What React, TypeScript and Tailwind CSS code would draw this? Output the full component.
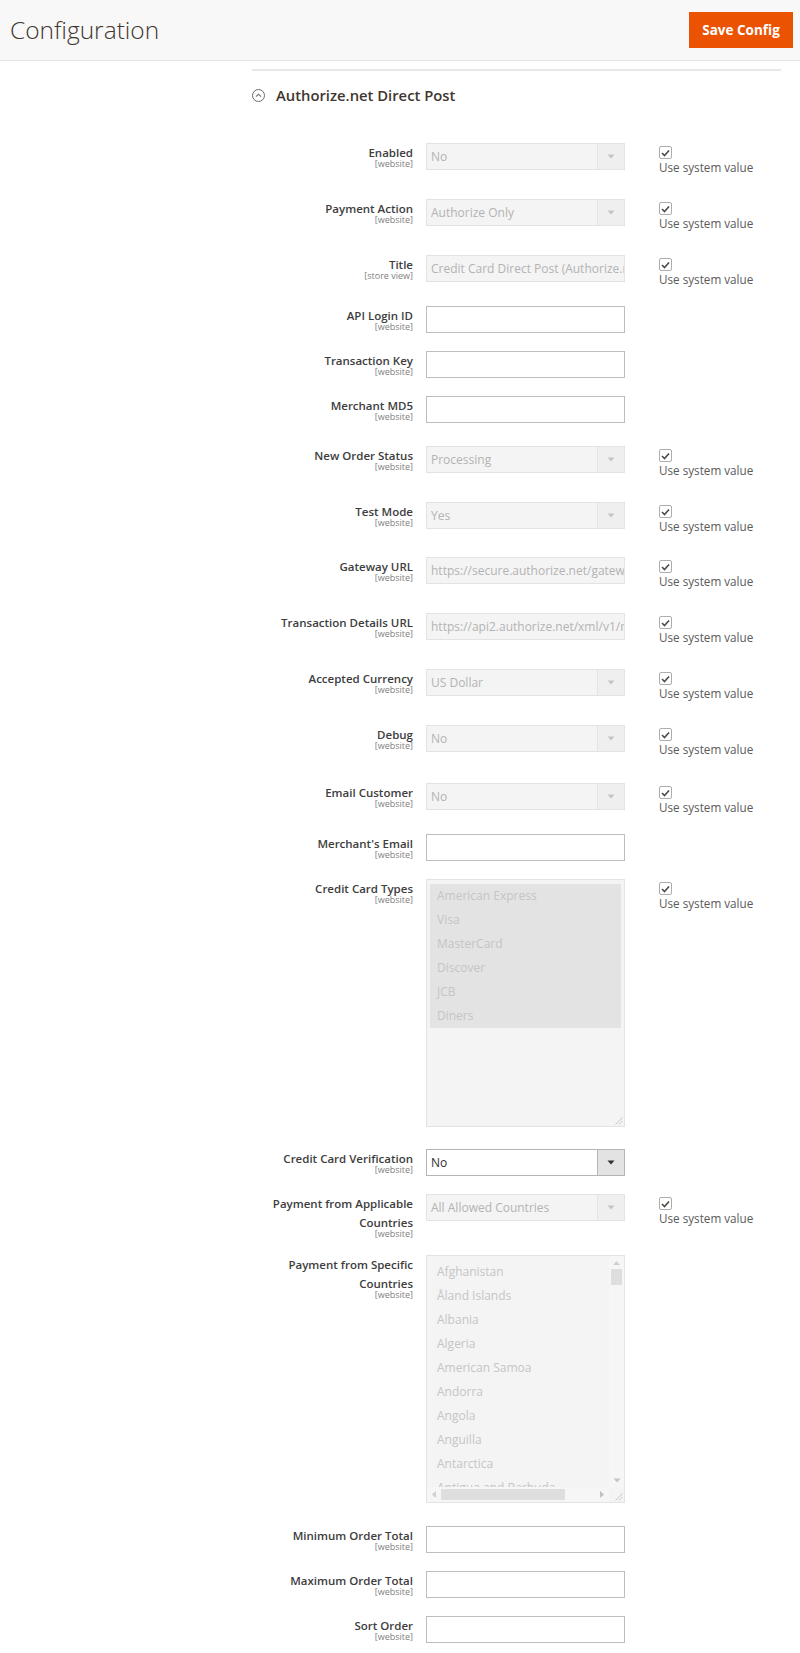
import React from "react";

type Kind = "select" | "text" | "multi" | "countries";

interface Row {
  label: string;
  scope: string;
  kind: Kind;
  value?: string;
  disabled?: boolean;
  system?: boolean;
  space: string;
}

const rows: Row[] = [
  { label: "Enabled", scope: "[website]", kind: "select", value: "No", disabled: true, system: true, space: "pt-[5px] pb-[19px]" },
  { label: "Payment Action", scope: "[website]", kind: "select", value: "Authorize Only", disabled: true, system: true, space: "pt-[5px] pb-[19px]" },
  { label: "Title", scope: "[store view]", kind: "text", value: "Credit Card Direct Post (Authorize.net)", disabled: true, system: true, space: "pt-[5px] pb-[19px]" },
  { label: "API Login ID", scope: "[website]", kind: "text", space: "pb-[18px]" },
  { label: "Transaction Key", scope: "[website]", kind: "text", space: "pb-[18px]" },
  { label: "Merchant MD5", scope: "[website]", kind: "text", space: "pb-[18px]" },
  { label: "New Order Status", scope: "[website]", kind: "select", value: "Processing", disabled: true, system: true, space: "pt-[5px] pb-[19px]" },
  { label: "Test Mode", scope: "[website]", kind: "select", value: "Yes", disabled: true, system: true, space: "pt-[5px] pb-[18px]" },
  { label: "Gateway URL", scope: "[website]", kind: "text", value: "https://secure.authorize.net/gateway/transact.dll", disabled: true, system: true, space: "pt-[5px] pb-[19px]" },
  { label: "Transaction Details URL", scope: "[website]", kind: "text", value: "https://api2.authorize.net/xml/v1/request.api", disabled: true, system: true, space: "pt-[5px] pb-[19px]" },
  { label: "Accepted Currency", scope: "[website]", kind: "select", value: "US Dollar", disabled: true, system: true, space: "pt-[5px] pb-[19px]" },
  { label: "Debug", scope: "[website]", kind: "select", value: "No", disabled: true, system: true, space: "pt-[5px] pb-[21px]" },
  { label: "Email Customer", scope: "[website]", kind: "select", value: "No", disabled: true, system: true, space: "pt-[5px] pb-[19px]" },
  { label: "Merchant's Email", scope: "[website]", kind: "text", space: "pb-[18px]" },
  { label: "Credit Card Types", scope: "[website]", kind: "multi", disabled: true, system: true, space: "pb-[22px]" },
  { label: "Credit Card Verification", scope: "[website]", kind: "select", value: "No", space: "pb-[18px]" },
  { label: "Payment from Applicable Countries", scope: "[website]", kind: "select", value: "All Allowed Countries", disabled: true, system: true, space: "pb-[17px]" },
  { label: "Payment from Specific Countries", scope: "[website]", kind: "countries", disabled: true, space: "pb-[23px]" },
  { label: "Minimum Order Total", scope: "[website]", kind: "text", space: "pb-[18px]" },
  { label: "Maximum Order Total", scope: "[website]", kind: "text", space: "pb-[18px]" },
  { label: "Sort Order", scope: "[website]", kind: "text", space: "pb-[10px]" },
];

const cardTypes = ["American Express", "Visa", "MasterCard", "Discover", "JCB", "Diners"];

const countries = [
  "Afghanistan",
  "Åland Islands",
  "Albania",
  "Algeria",
  "American Samoa",
  "Andorra",
  "Angola",
  "Anguilla",
  "Antarctica",
  "Antigua and Barbuda",
];

function Arrow({ dark }: { dark?: boolean }) {
  return (
    <svg width="8" height="5" viewBox="0 0 8 5">
      <path d="M0.5 0.5h7L4 4.5z" fill={dark ? "#303030" : "#c4c4c4"} />
    </svg>
  );
}

function Resizer() {
  return (
    <svg width="9" height="9" viewBox="0 0 9 9" className="absolute right-[1px] bottom-[1px]">
      <path d="M8.5 1.5L1.5 8.5M8.5 5L5 8.5" stroke="#c8c8c8" strokeWidth="1" />
    </svg>
  );
}

function Control({ row }: { row: Row }) {
  if (row.kind === "select") {
    return (
      <div
        className={
          row.disabled
            ? "flex h-[27px] border border-[#e3e3e3] bg-[#f4f4f4]"
            : "flex h-[27px] border border-[#b5b5b5] bg-white"
        }
      >
        <div
          className={
            row.disabled
              ? "flex-1 overflow-hidden whitespace-nowrap pl-[4px] text-[12px] leading-[25px] text-[#b3b3b3]"
              : "flex-1 overflow-hidden whitespace-nowrap pl-[4px] text-[12px] leading-[25px] text-[#303030]"
          }
        >
          {row.value}
        </div>
        <div
          className={
            row.disabled
              ? "flex w-[27px] items-center justify-center border-l border-[#e3e3e3] bg-[#efefef]"
              : "flex w-[27px] items-center justify-center border-l border-[#b5b5b5] bg-[#e3e3e3]"
          }
        >
          <Arrow dark={!row.disabled} />
        </div>
      </div>
    );
  }

  if (row.kind === "text") {
    return (
      <div
        className={
          row.disabled
            ? "h-[27px] overflow-hidden whitespace-nowrap border border-[#e3e3e3] bg-[#f4f4f4] pl-[4px] text-[12px] leading-[25px] text-[#b3b3b3]"
            : "h-[27px] border border-[#bdbdbd] bg-white"
        }
      >
        {row.value}
      </div>
    );
  }

  if (row.kind === "multi") {
    return (
      <div className="relative h-[248px] border border-[#e3e3e3] bg-[#f4f4f4] px-[3px] pt-[4px]">
        <div className="bg-[#e3e3e3]">
          {cardTypes.map((c) => (
            <div key={c} className="h-[24px] pl-[7px] text-[12px] leading-[24px] text-[#c5c5c5]">
              {c}
            </div>
          ))}
        </div>
        <Resizer />
      </div>
    );
  }

  // specific countries list, scrollbars drawn by hand
  return (
    <div className="relative flex h-[248px] flex-col border border-[#e3e3e3] bg-[#f4f4f4]">
      <div className="flex min-h-0 flex-1">
        <div className="flex-1 overflow-hidden pt-[4px]">
          {countries.map((c) => (
            <div key={c} className="h-[24px] whitespace-nowrap pl-[10px] text-[12px] leading-[24px] text-[#c5c5c5]">
              {c}
            </div>
          ))}
        </div>
        <div className="flex w-[15px] flex-col items-center bg-[#f6f6f6]">
          <div className="flex h-[13px] items-center">
            <svg width="7" height="4" viewBox="0 0 7 4">
              <path d="M0 4h7L3.5 0z" fill="#d0d0d0" />
            </svg>
          </div>
          <div className="h-[16px] w-[11px] bg-[#dedede]" />
          <div className="flex-1" />
          <div className="flex h-[13px] items-center">
            <Arrow />
          </div>
        </div>
      </div>
      <div className="flex h-[15px] bg-[#f6f6f6]">
        <div className="flex w-[14px] items-center justify-center">
          <svg width="4" height="7" viewBox="0 0 4 7">
            <path d="M4 0v7L0 3.5z" fill="#d0d0d0" />
          </svg>
        </div>
        <div className="flex flex-1 items-center">
          <div className="h-[11px] w-[124px] bg-[#dedede]" />
        </div>
        <div className="flex w-[14px] items-center justify-center">
          <svg width="4" height="7" viewBox="0 0 4 7">
            <path d="M0 0v7L4 3.5z" fill="#c0c0c0" />
          </svg>
        </div>
        <div className="relative w-[15px] bg-[#f4f4f4]">
          <Resizer />
        </div>
      </div>
    </div>
  );
}

function SystemValue() {
  return (
    <div className="h-[32px] pt-[3px]">
      <div className="flex h-[13px] w-[13px] items-center justify-center rounded-[2px] border border-[#adadad] bg-white">
        <svg width="9" height="8" viewBox="0 0 9 8">
          <path d="M1 4l2.5 2.5L8 1.5" fill="none" stroke="#514943" strokeWidth="1.6" />
        </svg>
      </div>
      <div className="text-[11.7px] leading-[16px] whitespace-nowrap text-[#5a5a5a]">Use system value</div>
    </div>
  );
}

export default function App() {
  return (
    <div className="min-h-[1653px] bg-white font-['Open_Sans',sans-serif] text-[#303030]">
      <header className="flex h-[61px] items-center justify-between border-b border-[#e3e3e3] bg-[#f8f8f8]">
        <h1 className="pl-[10px] text-[24.5px] font-light text-[#41362f]">Configuration</h1>
        <button className="mr-[7px] h-[36px] w-[104px] bg-[#eb5202] text-[13.5px] font-bold text-white">
          Save Config
        </button>
      </header>

      <div className="pl-[252px] pr-[19px]">
        <div className="mt-[8px] h-[2px] bg-[#e8e8e8]" />
        <div className="mt-[12px] flex h-[24px] items-center gap-[11px]">
          <svg width="13" height="13" viewBox="0 0 13 13">
            <circle cx="6.5" cy="6.5" r="6" fill="none" stroke="#6b6b6b" strokeWidth="1" />
            <path d="M4 7.7l2.5-2.5 2.5 2.5" fill="none" stroke="#6b6b6b" strokeWidth="1.1" />
          </svg>
          <span className="text-[14.8px] font-semibold text-[#41362f]">Authorize.net Direct Post</span>
        </div>

        <div className="mt-[31px]">
          {rows.map((row) => (
            <div key={row.label} className={"flex items-start " + row.space}>
              <div className="w-[161px] shrink-0 text-right">
                <div className="text-[11.5px] font-semibold leading-[19px] text-[#3d3d3d]">{row.label}</div>
                <div className="-mt-[3px] text-[9px] leading-[9px] text-[#808080]">{row.scope}</div>
              </div>
              <div className="ml-[13px] w-[199px] shrink-0">
                <Control row={row} />
              </div>
              {row.system && (
                <div className="ml-[34px]">
                  <SystemValue />
                </div>
              )}
            </div>
          ))}
        </div>
      </div>
    </div>
  );
}
